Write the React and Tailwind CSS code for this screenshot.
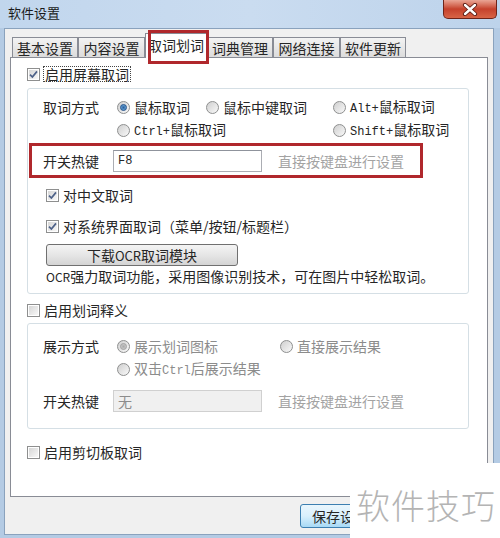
import React from "react";

function Check({ checked }) {
  return (
    <span className="w-[13px] h-[13px] shrink-0 border border-[#8e8f8f] bg-white p-px flex">
      <span className="flex-1 flex items-center justify-center bg-linear-to-br from-[#d6d6d6] to-[#f8f8f8]">
        {checked && (
          <svg width="9" height="9" viewBox="0 0 9 9">
            <path d="M1 4.6 L3.4 7 L8 1.4" stroke="#4d6188" strokeWidth="1.7" fill="none" />
          </svg>
        )}
      </span>
    </span>
  );
}

function Radio({ checked, disabled }) {
  return (
    <span className="w-[13px] h-[13px] shrink-0 rounded-full border border-[#8e8f8f] bg-linear-to-br from-[#cfcfcf] to-[#f9f9f9] flex items-center justify-center">
      {checked && !disabled && (
        <span className="w-[7px] h-[7px] rounded-full bg-radial from-[#2c5c9c] to-[#7cc0ea] border border-[#1f4f8a]" />
      )}
      {checked && disabled && (
        <span className="w-[7px] h-[7px] rounded-full bg-radial from-[#a9a9a9] to-[#d4d4d4] border border-[#a0a0a0]" />
      )}
    </span>
  );
}

function Opt({ checked, disabled, children }) {
  return (
    <div className="flex items-center gap-[4px] h-[18px]">
      <Radio checked={checked} disabled={disabled} />
      <span className={disabled ? "text-[#8c8c8c] leading-[18px] whitespace-nowrap" : "leading-[18px] whitespace-nowrap"}>
        {children}
      </span>
    </div>
  );
}

function Mono({ children }) {
  return <span className="font-['Liberation_Mono',monospace] text-[12px]">{children}</span>;
}

function Tab({ children, w }) {
  return (
    <div
      className={`h-[20px] border-t border-l border-r border-[#898c95] bg-linear-to-b from-[#f3f3f3] to-[#dcdcdc] flex items-center justify-center leading-none text-[14px] ${w}`}
    >
      {children}
    </div>
  );
}

export default function App() {
  return (
    <div className="relative w-[500px] h-[538px] overflow-hidden bg-[#b4cbe4] font-['Noto_Sans_CJK_SC',sans-serif] text-[14px] text-[#262626] flex flex-col">
      {/* title bar */}
      <div className="h-[28px] shrink-0 flex items-start bg-linear-to-r from-[#c1d6ed] via-[#cadcf0] to-[#bdd3eb]">
        <div className="pl-[8px] pt-[4px] text-[13px] leading-[17px] text-[#1a1a1a]">软件设置</div>
        <div className="ml-auto mr-[3px] w-[54px] h-[19px] rounded-b-[5px] border border-t-0 border-[#6e2419] bg-linear-to-b from-[#e9a595] via-[#c5412c] to-[#d86446] flex items-center justify-center">
          <svg width="16" height="13" viewBox="0 0 16 13">
            <path d="M3 2 L13 11 M13 2 L3 11" stroke="#5a1a12" strokeWidth="4.2" strokeLinecap="round" />
            <path d="M3 2 L13 11 M13 2 L3 11" stroke="#ffffff" strokeWidth="2.4" strokeLinecap="round" />
          </svg>
        </div>
      </div>

      {/* client area */}
      <div className="flex-1 ml-[4px] mr-[6px] mb-[3px] bg-[#f0f0f0] border border-[#8aa2bd] flex flex-col px-[5px] pt-[4px]">
        {/* tab strip */}
        <div className="h-[24px] flex items-end pl-[2px] relative z-10">
          <Tab w="w-[66px]">基本设置</Tab>
          <Tab w="w-[67px]">内容设置</Tab>
          <div className="relative h-[25px] w-[62px] -mb-px border-t border-l border-r border-[#898c95] bg-white flex items-start justify-center pt-[4px] leading-none text-[14px]">
            取词划词
            <div className="absolute -top-[4px] left-[2px] w-[61px] h-[34px] border-[3px] border-[#b0282c]" />
          </div>
          <Tab w="w-[66px]">词典管理</Tab>
          <Tab w="w-[67px]">网络连接</Tab>
          <Tab w="w-[66px]">软件更新</Tab>
        </div>

        {/* tab page */}
        <div className="h-[440px] border border-[#898c95] bg-white pl-[16px] pr-[18px] pt-[8px] flex flex-col">
          <div className="h-[16px] flex items-center gap-[3px]">
            <Check checked />
            <span className="border border-dotted border-[#444] px-px leading-[14px]">启用屏幕取词</span>
          </div>

          {/* group 1 */}
          <div className="mt-[6px] h-[206px] border border-[#d5dfe5] rounded-[3px] pl-[15px] pt-[9px] flex flex-col">
            <div className="flex">
              <div className="w-[74px] h-[18px] leading-[18px]">取词方式</div>
              <div className="grid grid-cols-[89px_127px_auto] gap-y-[5px]">
                <Opt checked>鼠标取词</Opt>
                <Opt>鼠标中键取词</Opt>
                <Opt><Mono>Alt+</Mono>鼠标取词</Opt>
                <Opt><Mono>Ctrl+</Mono>鼠标取词</Opt>
                <div />
                <Opt><Mono>Shift+</Mono>鼠标取词</Opt>
              </div>
            </div>

            <div className="relative mt-[11px] h-[22px] flex items-center">
              <div className="w-[70px]">开关热键</div>
              <div className="w-[149px] h-[22px] border border-[#abadb3] border-t-[#8f939c] bg-white pl-[4px] flex items-center">
                <Mono>F8</Mono>
              </div>
              <div className="ml-[16px] text-[#a3a3a3]">直接按键盘进行设置</div>
              <div className="absolute -left-[14px] -top-[7px] w-[394px] h-[35px] border-[3px] border-[#b0282c]" />
            </div>

            <div className="mt-[15px] h-[16px] pl-[3px] flex items-center gap-[4px]">
              <Check checked />
              <span>对中文取词</span>
            </div>
            <div className="mt-[15px] h-[16px] pl-[3px] flex items-center gap-[4px]">
              <Check checked />
              <span>对系统界面取词（菜单/按钮/标题栏）</span>
            </div>
            <div className="ml-[3px] mt-[10px] w-[192px] h-[22px] rounded-[3px] border border-[#707070] bg-linear-to-b from-[#f4f4f4] via-[#e6e6e6] to-[#d4d4d4] flex items-center justify-center leading-none">
              下载<span className="text-[13px]">OCR</span>取词模块
            </div>
            <div className="ml-[3px] mt-[2px] h-[16px] leading-[16px] whitespace-nowrap">
              <span className="text-[12px]">OCR</span>强力取词功能，采用图像识别技术，可在图片中轻松取词。
            </div>
          </div>

          <div className="mt-[8px] h-[16px] flex items-center gap-[4px]">
            <Check />
            <span>启用划词释义</span>
          </div>

          {/* group 2 */}
          <div className="mt-[5px] h-[106px] border border-[#d5dfe5] rounded-[3px] pl-[15px] pt-[13px] flex flex-col">
            <div className="flex">
              <div className="w-[74px] h-[18px] leading-[18px]">展示方式</div>
              <div className="grid grid-cols-[163px_auto] gap-y-[5px]">
                <Opt checked disabled>展示划词图标</Opt>
                <Opt disabled>直接展示结果</Opt>
                <Opt disabled>双击<Mono>Ctrl</Mono>后展示结果</Opt>
              </div>
            </div>
            <div className="mt-[12px] h-[22px] flex items-center">
              <div className="w-[70px]">开关热键</div>
              <div className="w-[149px] h-[22px] border border-[#d0d0d0] bg-[#f0f0f0] pl-[4px] flex items-center text-[#8c8c8c]">
                无
              </div>
              <div className="ml-[16px] text-[#a3a3a3]">直接按键盘进行设置</div>
            </div>
          </div>

          <div className="mt-[15px] h-[16px] flex items-center gap-[4px]">
            <Check />
            <span>启用剪切板取词</span>
          </div>
        </div>

        {/* footer */}
        <div className="flex-1 flex items-center pl-[290px]">
          <div className="w-[80px] h-[24px] rounded-[3px] border border-[#3c7fb1] bg-linear-to-b from-[#eaf6fd] via-[#d9f0fc] to-[#a7d9f5] flex items-center justify-center leading-none">
            保存设置
          </div>
        </div>
      </div>

      {/* watermark */}
      <div className="absolute left-[350px] top-[463px] w-[150px] h-[75px] bg-white flex items-center pl-[6px] pt-[8px]">
        <span className="text-[34px] leading-none text-[#b4b4b4] font-light tracking-[1px]">软件技巧</span>
      </div>
    </div>
  );
}
